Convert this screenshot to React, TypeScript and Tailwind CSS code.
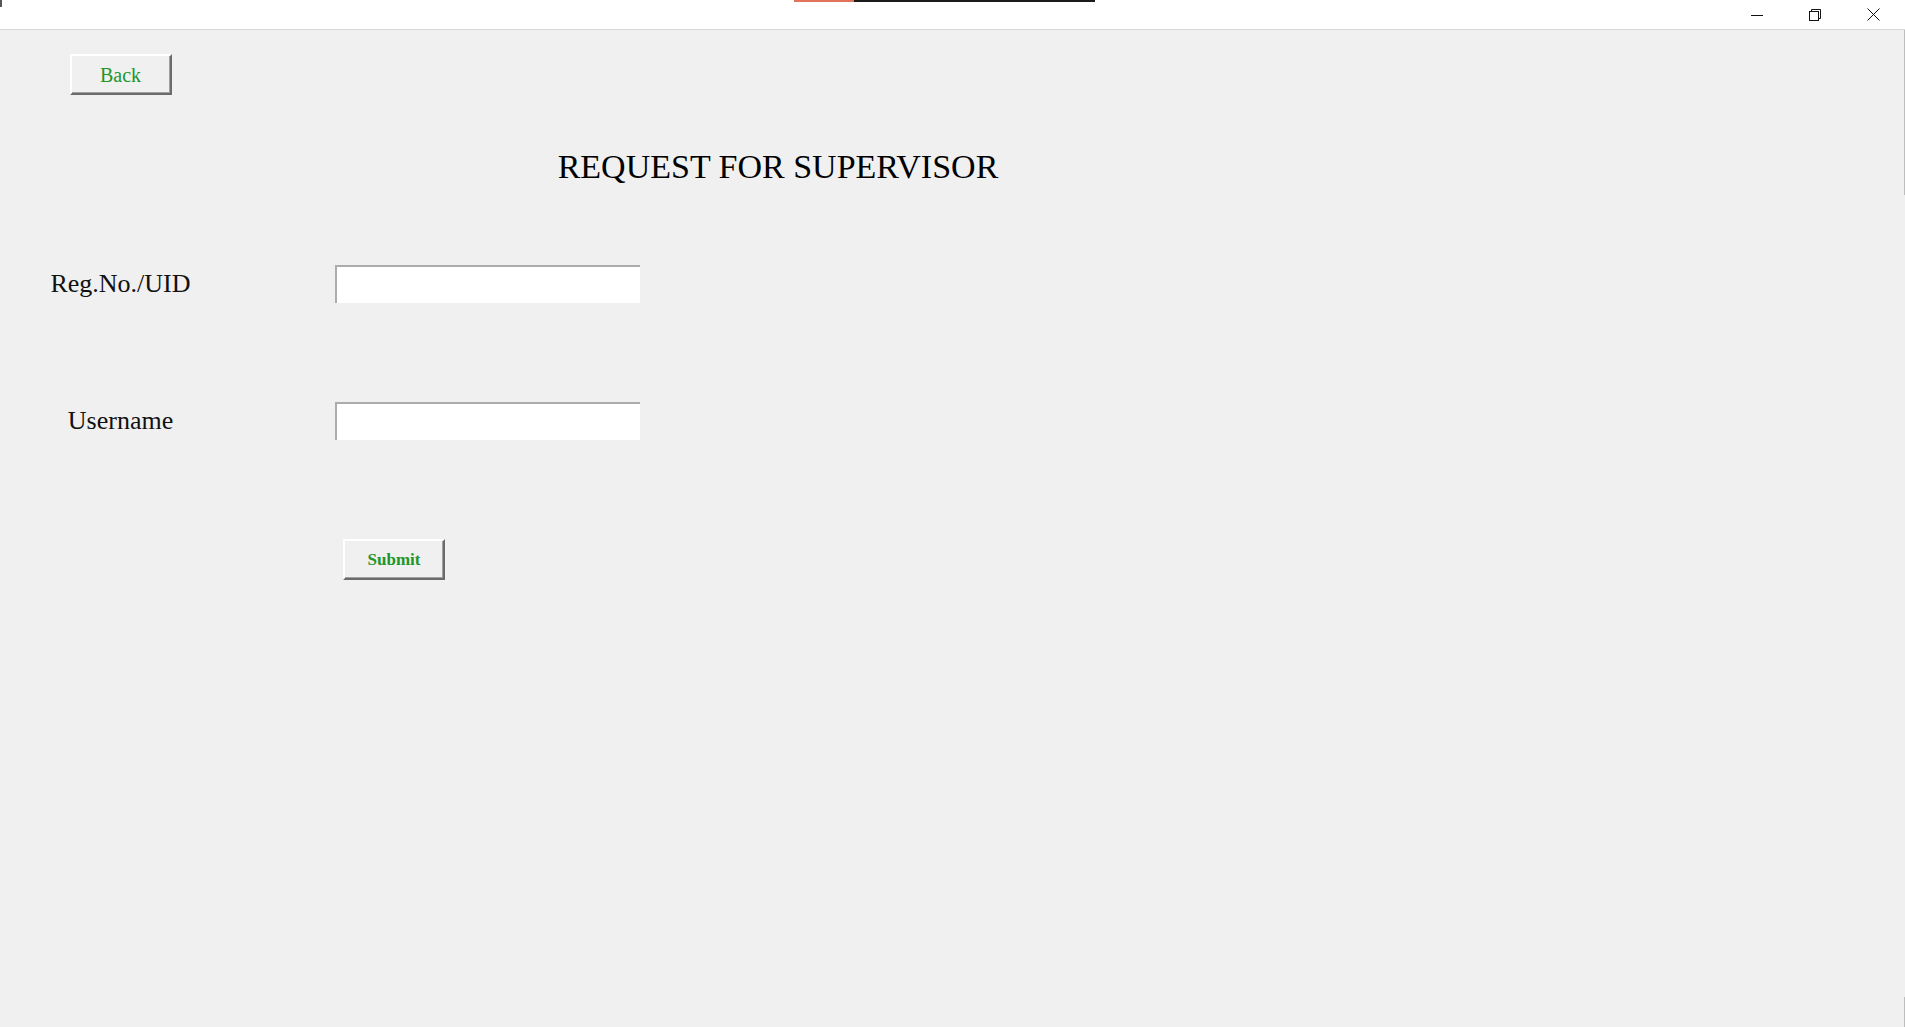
export default function App() {
  return (
    <div className="w-[1905px] h-[1027px] overflow-hidden bg-[#f0f0f0] font-['Liberation_Serif','Times_New_Roman',serif] text-black relative">
      {/* Title bar */}
      <div className="h-[30px] bg-white border-b border-[#d8d8d8] flex justify-end pr-[3px] relative">
        <span className="absolute left-0 top-0 w-[2px] h-[7px] bg-[#555]" />
        <div className="absolute top-0 left-[794px] flex h-[2px]">
          <span className="w-[60px] bg-[#e0735a]" />
          <span className="w-[241px] bg-[#1b1b1b]" />
        </div>
        <div className="w-[58px] flex items-center justify-center">
          <svg width="12" height="12" viewBox="0 0 12 12">
            <path d="M0 6.5h12" stroke="#111" strokeWidth="1" />
          </svg>
        </div>
        <div className="w-[58px] flex items-center justify-center">
          <svg width="12" height="12" viewBox="0 0 12 12" fill="none" stroke="#111" strokeWidth="1">
            <rect x="0.5" y="2.5" width="9" height="9" />
            <path d="M2.5 2.5V0.5h9v9h-2" />
          </svg>
        </div>
        <div className="w-[58px] flex items-center justify-center">
          <svg width="13" height="13" viewBox="0 0 13 13" fill="none" stroke="#111" strokeWidth="1">
            <path d="M0.5 0.5l12 12M12.5 0.5l-12 12" />
          </svg>
        </div>
      </div>

      {/* Window edge marks */}
      <span className="absolute right-0 top-[30px] w-[1px] h-[165px] bg-[#bdbdbd]" />
      <span className="absolute right-0 bottom-0 w-[1px] h-[30px] bg-[#bdbdbd]" />

      {/* Form */}
      <div className="flex flex-col">
        <div className="w-[241px] flex justify-center pt-[24px]">
          <button className="w-[102px] h-[41px] bg-[#f0f0f0] border-2 border-t-white border-l-white border-r-[#6b6b6b] border-b-[#6b6b6b] shadow-[inset_-1px_-1px_0_#a0a0a0] text-[#1e962a] text-[20px] leading-none">
            Back
          </button>
        </div>

        <div className="w-[1556px] text-center mt-[55px] text-[34px] leading-[34px] h-[34px]">
          REQUEST FOR SUPERVISOR
        </div>

        <div className="flex items-center mt-[81px]">
          <div className="w-[241px] text-center text-[26px] leading-[26px] text-[#111]">Reg.No./UID</div>
          <input
            type="text"
            className="ml-[94px] w-[305px] h-[38px] bg-white border-t-2 border-l-2 border-[#acacac] outline-none"
          />
        </div>

        <div className="flex items-center mt-[99px]">
          <div className="w-[241px] text-center text-[26px] leading-[26px] text-[#111]">Username</div>
          <input
            type="text"
            className="ml-[94px] w-[305px] h-[38px] bg-white border-t-2 border-l-2 border-[#acacac] outline-none"
          />
        </div>

        <div className="pl-[343px] mt-[99px]">
          <button className="w-[102px] h-[41px] bg-[#f0f0f0] border-2 border-t-white border-l-white border-r-[#6b6b6b] border-b-[#6b6b6b] shadow-[inset_-1px_-1px_0_#a0a0a0] text-[#1e962a] text-[17px] font-bold leading-none">
            Submit
          </button>
        </div>
      </div>
    </div>
  )
}
